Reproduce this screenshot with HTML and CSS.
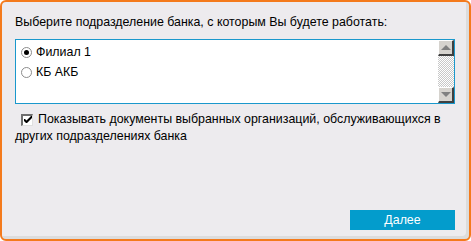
FILE: index.html
```html
<html>

<head>
    <title>Выбор подразделения</title>
    <link rel="stylesheet" href="styles.css">
</head>

<body>
    <div class="dialog">
        <div class="dialog-title">Выберите подразделение банка, с которым Вы будете работать:</div>
        <div class="listbox">
            <div class="list-items">
                <label class="list-item">
                    <span class="radio radio-checked"></span>
                    <span>Филиал 1</span>
                </label>
                <label class="list-item">
                    <span class="radio"></span>
                    <span>КБ АКБ</span>
                </label>
            </div>
            <div class="scrollbar">
                <div class="scroll-btn"><span class="arrow-up"></span></div>
                <div class="scroll-track"></div>
                <div class="scroll-btn"><span class="arrow-down"></span></div>
            </div>
        </div>
        <div class="option">
            <span class="checkbox">
                <svg width="8" height="8" viewBox="0 0 8 8">
                    <path d="M0 3 L0 5 L2 7 L3 7 L8 2 L8 0 L7 0 L2.5 4.5 L1 3 Z" fill="#000" />
                </svg>
            </span>Показывать документы выбранных организаций, обслуживающихся в других подразделениях банка
        </div>
        <div class="spacer"></div>
        <div class="dialog-footer">
            <button class="btn-next">Далее</button>
        </div>
    </div>
</body>

</html>
```

FILE: styles.css
```css
body {
    font-family: "Liberation Sans", Arial, sans-serif;
    font-size: 12.4px;
    margin: 0;
    padding: 0;
    background-color: #ffffff;
}

.dialog {
    box-sizing: border-box;
    width: 471px;
    height: 241px;
    border: 2px solid #f47a1c;
    border-radius: 6px;
    background-color: #edebee;
    box-shadow: inset -3px -3px 0 #dcdcdc;
    padding: 13px 14px 9px 13px;
    display: flex;
    flex-direction: column;
}

.dialog-title {
    line-height: 15px;
    color: #000000;
}

.listbox {
    margin-top: 9px;
    height: 65px;
    box-sizing: border-box;
    border: 1px solid #1a98cc;
    background-color: #ffffff;
    display: flex;
}

.list-items {
    flex: 1;
    padding: 2px 5px;
}

.list-item {
    display: flex;
    align-items: center;
    height: 20px;
    gap: 4px;
}

.radio {
    position: relative;
    width: 9px;
    height: 9px;
    border: 1px solid #8c8c8c;
    border-radius: 50%;
    background-color: #ffffff;
}

.radio-checked::after {
    content: "";
    position: absolute;
    left: 2px;
    top: 2px;
    width: 5px;
    height: 5px;
    border-radius: 50%;
    background-color: #000000;
}

.scrollbar {
    width: 16px;
    display: flex;
    flex-direction: column;
}

.scroll-btn {
    box-sizing: border-box;
    height: 16px;
    background-color: #d6d3ce;
    border-top: 1px solid #ffffff;
    border-left: 1px solid #ffffff;
    border-right: 2px solid #404040;
    border-bottom: 2px solid #404040;
    display: flex;
    align-items: center;
    justify-content: center;
}

.scroll-track {
    flex: 1;
    background: repeating-conic-gradient(#c8c8c8 0 25%, #ffffff 0 50%) 0 0 / 2px 2px;
}

.arrow-up {
    width: 0;
    height: 0;
    border-left: 5px solid transparent;
    border-right: 5px solid transparent;
    border-bottom: 5px solid #808080;
}

.arrow-down {
    width: 0;
    height: 0;
    border-left: 5px solid transparent;
    border-right: 5px solid transparent;
    border-top: 5px solid #808080;
}

.option {
    margin-top: 7px;
    line-height: 17px;
    color: #000000;
}

.checkbox {
    display: inline-flex;
    align-items: center;
    justify-content: center;
    box-sizing: border-box;
    width: 12px;
    height: 12px;
    margin: 0 5px 0 6px;
    vertical-align: -1px;
    background-color: #ffffff;
    border-top: 2px solid #6e6e6e;
    border-left: 2px solid #6e6e6e;
    border-right: 1px solid #e0e0e0;
    border-bottom: 1px solid #e0e0e0;
}

.spacer {
    flex: 1;
}

.dialog-footer {
    display: flex;
    justify-content: flex-end;
}

.btn-next {
    width: 105px;
    height: 20px;
    border: none;
    padding: 0;
    background-color: #039ccc;
    color: #ffffff;
    font-family: "Liberation Sans", Arial, sans-serif;
    font-size: 12.4px;
    cursor: pointer;
}
```
